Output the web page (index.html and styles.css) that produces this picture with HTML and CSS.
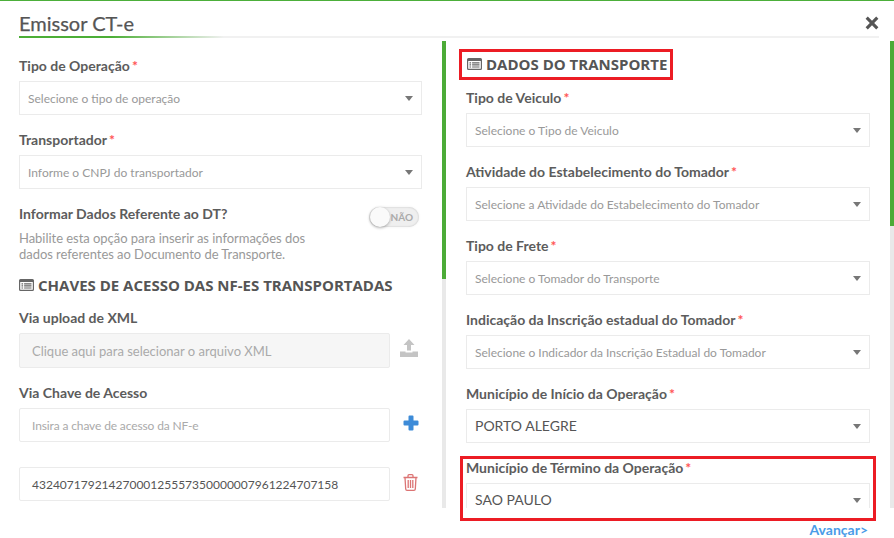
FILE: index.html
```html
<!DOCTYPE html>
<html lang="pt-BR">
<head>
<meta charset="utf-8">
<title>Emissor CT-e</title>
<link rel="stylesheet" href="styles.css">
</head>
<body>
<div class="modal">
  <header class="head">
    <h1 class="title">Emissor CT-e</h1>
    <svg class="close" viewBox="0 0 14 14"><path d="M2.8 0.6 7 4.8 11.2 0.6 13.4 2.8 9.2 7 13.4 11.2 11.2 13.4 7 9.2 2.8 13.4 0.6 11.2 4.8 7 0.6 2.8Z"/></svg>
  </header>
  <div class="cols">
    <section class="panel panel-left">
      <div class="body">
        <label class="label">Tipo de Operação<i>*</i></label>
        <div class="select ph">Selecione o tipo de operação<b></b></div>
        <label class="label">Transportador<i>*</i></label>
        <div class="select ph">Informe o CNPJ do transportador<b></b></div>
        <div class="switch-row">
          <div>
            <div class="label sw-label">Informar Dados Referente ao DT?</div>
            <p class="help">Habilite esta opção para inserir as informações dos<br>dados referentes ao Documento de Transporte.</p>
          </div>
          <div class="switch"><span class="knob"></span><span class="sw-text">NÃO</span></div>
        </div>
        <h2 class="section"><svg class="list" viewBox="0 0 15 12"><path fill-rule="evenodd" d="M1.5 0h12A1.5 1.5 0 0 1 15 1.5v9a1.5 1.5 0 0 1-1.5 1.5h-12A1.5 1.5 0 0 1 0 10.500v-9A1.500 1.500 0 0 1 1.500 0ZM1.200 3v7.300q0 .5.5.5h11.600q.5 0 .5-.5V3ZM2.500 4.200h1.600v1.200H2.500Zm2.600 0h7.400v1.200H5.100ZM2.500 6.300h1.600v1.200H2.500Zm2.600 0h7.400v1.200H5.100ZM2.500 8.400h1.600v1.200H2.500Zm2.600 0h7.400v1.200H5.100Z"/></svg>CHAVES DE ACESSO DAS NF-ES TRANSPORTADAS</h2>
        <label class="label">Via upload de XML</label>
        <div class="input-row">
          <div class="input file">Clique aqui para selecionar o arquivo XML</div>
          <svg class="ic" viewBox="0 0 18 18" fill="#c4c4c4"><path d="M9 0 14.500 6H11v5.500H7V6H3.500ZM0 12.500h5.500v1h7v-1H18V18H0Z"/></svg>
        </div>
        <label class="label">Via Chave de Acesso</label>
        <div class="input-row">
          <div class="input key ph-key">Insira a chave de acesso da NF-e</div>
          <svg class="ic ic-plus" viewBox="0 0 16 16" fill="#3d8bd8"><path d="M5.500 1.500Q5.500.5 6.500.5h3q1 0 1 1v4h4q1 0 1 1v3q0 1-1 1h-4v4q0 1-1 1h-3q-1 0-1-1v-4h-4q-1 0-1-1v-3q0-1 1-1h4Z"/></svg>
        </div>
        <div class="input-row row-value">
          <div class="input key value">43240717921427000125557350000007961224707158</div>
          <svg class="ic ic-trash" viewBox="0 0 15 17" fill="none" stroke="#dc7474" stroke-width="1.300"><path d="M.5 3.500h14M2 3.500l.7 11.500q.1 1.300 1.300 1.300h7q1.200 0 1.300-1.300L13 3.500M5 3.500V1.700q0-1 1-1h3q1 0 1 1v1.800M5.200 6v8M7.500 6v8M9.800 6v8"/></svg>
        </div>
      </div>
      <div class="bar bar-left"><span></span></div>
    </section>
    <section class="panel panel-right">
      <div class="body">
        <h2 class="section section-first"><svg class="list" viewBox="0 0 15 12"><path fill-rule="evenodd" d="M1.5 0h12A1.5 1.5 0 0 1 15 1.5v9a1.5 1.5 0 0 1-1.5 1.5h-12A1.5 1.5 0 0 1 0 10.500v-9A1.500 1.500 0 0 1 1.500 0ZM1.200 3v7.300q0 .5.5.5h11.600q.5 0 .5-.5V3ZM2.500 4.200h1.600v1.200H2.500Zm2.600 0h7.400v1.200H5.100ZM2.500 6.300h1.600v1.200H2.500Zm2.600 0h7.400v1.200H5.100ZM2.500 8.400h1.600v1.200H2.500Zm2.600 0h7.400v1.200H5.100Z"/></svg>DADOS DO TRANSPORTE</h2>
        <label class="label">Tipo de Veiculo<i>*</i></label>
        <div class="select ph">Selecione o Tipo de Veiculo<b></b></div>
        <label class="label">Atividade do Estabelecimento do Tomador<i>*</i></label>
        <div class="select ph">Selecione a Atividade do Estabelecimento do Tomador<b></b></div>
        <label class="label">Tipo de Frete<i>*</i></label>
        <div class="select ph">Selecione o Tomador do Transporte<b></b></div>
        <label class="label">Indicação da Inscrição estadual do Tomador<i>*</i></label>
        <div class="select ph">Selecione o Indicador da Inscrição Estadual do Tomador<b></b></div>
        <label class="label">Município de Início da Operação<i>*</i></label>
        <div class="select val">PORTO ALEGRE<b></b></div>
        <label class="label">Município de Término da Operação<i>*</i></label>
        <div class="select val">SAO PAULO<b></b></div>
      </div>
      <div class="bar bar-right"><span></span></div>
    </section>
  </div>
  <footer class="foot"><a class="next">Avançar&gt;</a></footer>
  <div class="mark mark-a"></div>
  <div class="mark mark-b"></div>
</div>
</body>
</html>
```
FILE: styles.css
```css
* { box-sizing: border-box; }
html, body { margin: 0; height: 100%; background: #fff; overflow: hidden; }
body { font-family: "Lato", sans-serif; color: #555; }
.modal { position: relative; width: 894px; height: 538px; border-top: 1px solid #4caf3a; overflow: hidden; }
.head { height: 37px; margin: 0 15px 0 19px; display: flex; justify-content: space-between; align-items: flex-start; border-bottom: 2px solid #f1f1f1; position: relative; }
.head::after { content: ""; position: absolute; left: 0; bottom: -2px; width: 205px; height: 2px; background: linear-gradient(90deg, #4cae36 0%, #4cae36 45%, rgba(76,174,54,0) 100%); }
.title { margin: 10px 0 0; font-size: 20px; line-height: 24px; font-weight: 400; color: #555; -webkit-text-stroke: .25px #555; }
.close { width: 14px; height: 14px; margin-top: 15px; fill: #555; }
.cols { display: flex; height: 470px; padding-top: 3px; }
.panel { position: relative; width: 448px; height: 467px; overflow: hidden; display: flex; flex: none; }
.body { flex: 1; min-width: 0; }
.panel-left { padding-left: 19px; width: 447px; }
.panel-left .body { padding-right: 25px; padding-top: 16px; }
.panel-right { padding-left: 19px; }
.panel-right .body { padding-right: 25px; }
.bar { position: absolute; top: 0; bottom: 0; width: 4px; background: #e9e9e9; }
.bar span { display: block; width: 100%; background: #4cab37; }
.bar-left { left: 442px; }
.bar-left span { height: 238px; }
.bar-right { left: 443px; }
.bar-right span { height: 185px; }
.label { display: block; font-size: 14px; line-height: 17px; font-weight: 700; color: #5c5c5c; margin: 0 0 7px; }
.label i { color: #f55; font-style: normal; font-weight: 700; margin-left: 2px; }
.select { position: relative; height: 34px; border: 1px solid #ebebeb; padding: 0 8px; line-height: 33px; margin-bottom: 16px; background: #fff; }
.select b { position: absolute; right: 8px; top: 14px; border: 4.500px solid transparent; border-top: 5px solid #777; border-bottom: 0; }
.ph { font-size: 12px; color: #999; }
.val { font-size: 14px; color: #555; line-height: 31px; }
.switch-row { display: flex; justify-content: space-between; align-items: flex-start; }
.sw-label { margin-bottom: 8px; }
.help { margin: 0; font-size: 13px; line-height: 16px; color: #999; letter-spacing: -.04px; }
.switch { position: relative; width: 50px; height: 20px; margin: 2px 3px 0 0; border-radius: 10px; background: #efefef; box-shadow: inset 0 0 2px rgba(0,0,0,.2), 0 0 3px rgba(0,0,0,.06); display: flex; align-items: center; justify-content: flex-end; padding-right: 6px; }
.knob { position: absolute; left: 1px; top: 0; width: 20px; height: 20px; border-radius: 50%; background: #fafafa; box-shadow: 0 1px 3px rgba(0,0,0,.3); }
.sw-text { font-size: 10px; font-weight: 700; color: #aaa; }
.section { margin: 13px 0 14px; font-family: "Open Sans", sans-serif; font-size: 15px; line-height: 20px; font-weight: 700; color: #555; display: flex; align-items: center; white-space: nowrap; }
.section-first { margin: 13px 0 15px 1px; }
.list { width: 15px; height: 12px; margin-right: 4px; fill: #666; flex: none; }
.input-row { display: flex; align-items: flex-start; margin-bottom: 16px; position: relative; }
.input { flex: none; width: 371px; height: 35px; border: 1px solid #ebebeb; border-radius: 2px; padding: 0 12px; }
.file { background: #f6f6f6; font-size: 13px; line-height: 35px; color: #aaa; }
.key { height: 34px; line-height: 33px; }
.ph-key { font-size: 12px; color: #aaa; letter-spacing: -.13px; }
.row-value { margin-top: 25px; }
.value { font-size: 12px; color: #555; }
.ic { width: 18px; height: 18px; margin: 6px 0 0 10px; flex: none; }
.ic-plus { width: 16px; height: 16px; margin: 7px 0 0 13px; }
.ic-trash { width: 15px; height: 17px; margin: 7px 0 0 13px; }
.foot { position: absolute; right: 26px; top: 522px; }
.next { display: block; font-size: 14px; line-height: 14px; font-weight: 700; color: #4a9ce8; }
.mark { position: absolute; border: 3px solid #ec1c24; pointer-events: none; }
.mark-a { left: 459px; top: 48px; width: 214px; height: 31px; }
.mark-b { left: 460px; top: 455px; width: 416px; height: 65px; }
```
